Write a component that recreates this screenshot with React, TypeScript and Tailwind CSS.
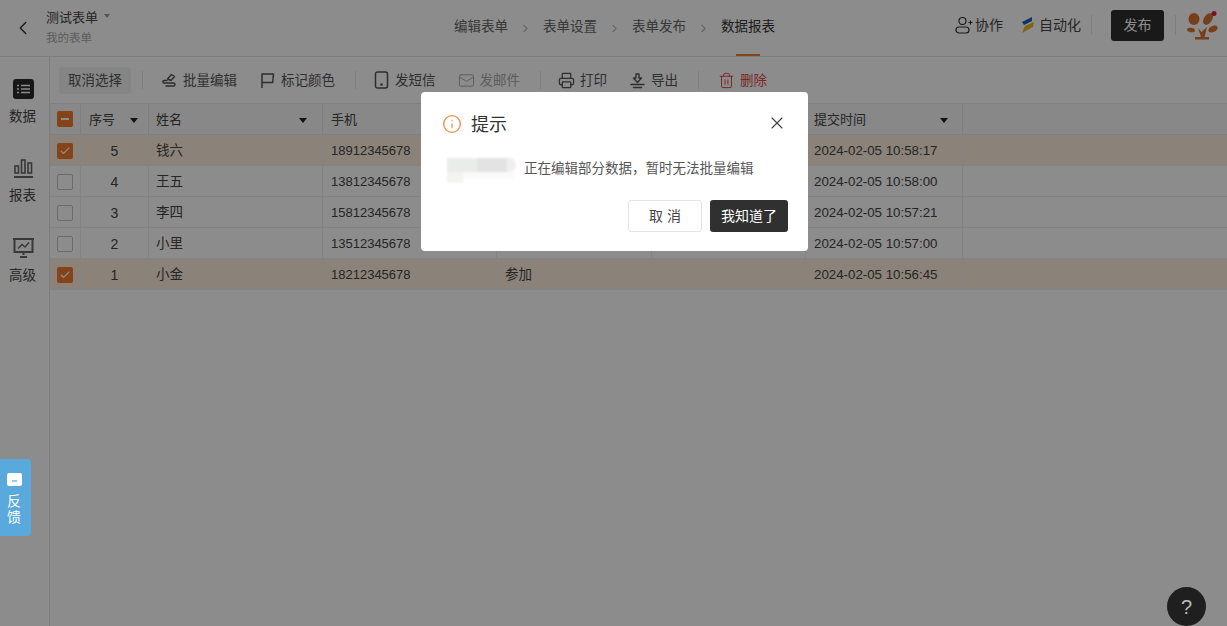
import { ChevronLeft, ChevronRight, Mail, Printer, Trash2, X, Check, Info } from "lucide-react";

const FONT = "font-['Liberation_Sans','Noto_Sans_CJK_SC',sans-serif]";

const rows = [
  { no: 5, name: "钱六", phone: "18912345678", answer: "", time: "2024-02-05 10:58:17", on: true },
  { no: 4, name: "王五", phone: "13812345678", answer: "", time: "2024-02-05 10:58:00", on: false },
  { no: 3, name: "李四", phone: "15812345678", answer: "", time: "2024-02-05 10:57:21", on: false },
  { no: 2, name: "小里", phone: "13512345678", answer: "", time: "2024-02-05 10:57:00", on: false },
  { no: 1, name: "小金", phone: "18212345678", answer: "参加", time: "2024-02-05 10:56:45", on: true },
];

const Caret = () => <span className="w-0 h-0 border-x-[4px] border-x-transparent border-t-[5px] border-t-[#222]" />;

const Divider = () => <div className="w-px h-[18px] bg-[#e6e6e6]" />;

// 工具栏按钮
const Tool = ({ icon, label, className = "text-[#555]" }: { icon: React.ReactNode; label: string; className?: string }) => (
  <div className={`flex items-center gap-[5px] text-[13.5px] ${className}`}>
    {icon}
    <span className="pt-[2px]">{label}</span>
  </div>
);

const EditIcon = () => (
  <svg width="17" height="17" viewBox="0 0 17 17" fill="none" stroke="currentColor" strokeWidth="1.4" strokeLinecap="round" strokeLinejoin="round">
    <path d="M6.5 7 10.5 2.5 13.5 4.5 10 8.5z" />
    <path d="M6 8.5H3C1.5 8.5 1.5 11 3 11H12.5C14.5 11 14.5 14 12.5 14H5" />
  </svg>
);

const FlagIcon = () => (
  <svg width="16" height="17" viewBox="0 0 16 17" fill="none" stroke="currentColor" strokeWidth="1.5" strokeLinejoin="round">
    <path d="M2 16V2h11.500l-.8 8.500H2" />
  </svg>
);

const PhoneIcon = () => (
  <svg width="17" height="18" viewBox="0 0 17 18" fill="none" stroke="currentColor" strokeWidth="1.5">
    <rect x="2.500" y="1" width="12" height="16" rx="2" />
    <circle cx="8.500" cy="13.500" r="0.6" fill="currentColor" />
  </svg>
);

const ExportIcon = () => (
  <svg width="17" height="17" viewBox="0 0 17 17" fill="none" stroke="currentColor" strokeWidth="1.4" strokeLinecap="round" strokeLinejoin="round">
    <path d="M7 2h3v4h2.500L8.500 10.500 4.500 6H7z" />
    <path d="M2 12.500h13M4.500 15.500h8" />
  </svg>
);

const DataIcon = () => (
  <svg width="21" height="21" viewBox="0 0 21 21">
    <rect width="21" height="20" rx="3" fill="#2b2b2b" />
    <path d="M4 6.500h2M8 6.500h9M4 10h2M8 10h9M4 13.500h2M8 13.500h9" stroke="#fff" strokeWidth="1.4" />
  </svg>
);

const ChartIcon = () => (
  <svg width="21" height="21" viewBox="0 0 21 21" fill="none" stroke="#666" strokeWidth="1.6">
    <rect x="2" y="8" width="3.500" height="7" />
    <rect x="8.500" y="2" width="3.500" height="13" />
    <rect x="15" y="5" width="3.500" height="10" />
    <path d="M1 19h19" strokeWidth="2" />
  </svg>
);

const ScreenIcon = () => (
  <svg width="21" height="21" viewBox="0 0 21 21" fill="none" stroke="#666" strokeWidth="2">
    <path d="M0 1h21M1.500 1v13h18V1" />
    <path d="M5 10.500 9 6.500 12 9 16 4.500" strokeWidth="1.4" />
    <path d="M10.500 14v3M7 19h7" />
  </svg>
);

const UserPlus = () => (
  <svg width="18" height="18" viewBox="0 0 18 18" fill="none" stroke="#333" strokeWidth="1.2">
    <circle cx="7.500" cy="5" r="3.500" />
    <rect x="1" y="11" width="13" height="6" rx="3" />
    <path d="M13.500 6.500h4M15.500 4.500v4" />
  </svg>
);

const BoltIcon = () => (
  <svg width="14" height="16" viewBox="0 0 14 16">
    <path d="M11 0 1 5 3 8 11 4z" fill="#1e5fb4" />
    <path d="M13 5 4 9 1 16 12 10z" fill="#e8b923" />
  </svg>
);

const TreeLogo = () => (
  <svg width="32" height="29" viewBox="0 0 32 29">
    <ellipse cx="7" cy="8" rx="5.500" ry="6" fill="#d8732e" />
    <ellipse cx="21" cy="8" rx="4" ry="6.500" fill="#d8732e" transform="rotate(35 21 8)" />
    <ellipse cx="4" cy="19" rx="4" ry="2.200" fill="#d8732e" transform="rotate(10 4 19)" />
    <ellipse cx="26" cy="18" rx="5" ry="3" fill="#d8732e" transform="rotate(-25 26 18)" />
    <path d="M11 17 14.500 21 20 16 17.500 26H22V28.500H8V26H14z" fill="#d8732e" />
    <circle cx="27" cy="2.500" r="2.500" fill="#d8234a" />
  </svg>
);

const Box = ({ on }: { on: boolean }) =>
  on ? (
    <span className="w-[16px] h-[16px] rounded-[2px] bg-[#f07a2c] flex items-center justify-center">
      <Check size={12} strokeWidth={2.2} color="#fff" />
    </span>
  ) : (
    <span className="w-[16px] h-[16px] rounded-[2px] border border-[#c4c4c4] bg-white" />
  );

export default function App() {
  return (
    <div className={`relative w-[1227px] h-[626px] overflow-hidden bg-white text-[#333] ${FONT}`}>
      {/* 顶栏 */}
      <header className="h-[57px] border-b border-[#e4e4e4] flex items-center bg-white">
        <ChevronLeft size={22} strokeWidth={1.5} className="ml-[12px] text-[#333]" />
        <div className="ml-[12px] w-[105px] self-start pt-[9px]">
          <div className="flex items-center gap-[6px] text-[13px] leading-[18px] text-[#444]">
            测试表单
            <span className="w-0 h-0 border-x-[3px] border-x-transparent border-t-[4px] border-t-[#999] -mt-1" />
          </div>
          <div className="text-[11.5px] leading-[16px] mt-[3px] text-[#aaa]">我的表单</div>
        </div>
        <nav className="ml-[303px] flex items-center text-[13.5px] text-[#666] h-full">
          <span className="pb-[2px]">编辑表单</span>
          <ChevronRight size={13} className="mx-[11px] text-[#bbb]" />
          <span className="pb-[2px]">表单设置</span>
          <ChevronRight size={13} className="mx-[11px] text-[#bbb]" />
          <span className="pb-[2px]">表单发布</span>
          <ChevronRight size={13} className="mx-[11px] text-[#bbb]" />
          <span className="relative h-full flex items-center pb-[2px] text-[#333]">
            数据报表
            <span className="absolute bottom-0 left-[15px] w-[24px] h-[2px] bg-[#f07a2c]" />
          </span>
        </nav>
        <div className="ml-auto flex items-center h-full pb-[6px]">
          <div className="flex items-center gap-[2px] text-[14px] text-[#444]">
            <UserPlus />
            协作
          </div>
          <div className="ml-[18px] flex items-center gap-[4px] text-[14px] text-[#444]">
            <BoltIcon />
            自动化
          </div>
          <div className="ml-[10px] w-px h-[20px] bg-[#e6e6e6]" />
          <div className="ml-[19px] w-[53px] h-[31px] rounded-[3px] bg-[#2e2e2e] text-white text-[14px] flex items-center justify-center">发布</div>
          <div className="ml-[11px] w-px h-[20px] bg-[#e6e6e6]" />
          <div className="ml-[11px] mr-[8px]">
            <TreeLogo />
          </div>
        </div>
      </header>

      <div className="flex h-[569px]">
        {/* 左侧导航 */}
        <aside className="w-[50px] shrink-0 border-r border-[#e4e4e4] flex flex-col items-center pt-[22px] pr-[2px] text-[13.5px] text-[#444]">
          <DataIcon />
          <span className="mt-[7px] -ml-[2px] leading-[20px]">数据</span>
          <div className="mt-[31px]"><ChartIcon /></div>
          <span className="mt-[7px] -ml-[2px] leading-[20px]">报表</span>
          <div className="mt-[32px]"><ScreenIcon /></div>
          <span className="mt-[7px] -ml-[2px] leading-[20px]">高级</span>
        </aside>

        <main className="flex-1 min-w-0">
          {/* 工具栏 */}
          <div className="h-[46px] flex items-center pl-[9px]">
            <div className="h-[27px] px-[9px] pt-[2px] rounded-[3px] bg-[#f3f3f3] text-[13.5px] text-[#555] flex items-center">取消选择</div>
            <div className="ml-[11px]"><Divider /></div>
            <div className="ml-[18px]"><Tool icon={<EditIcon />} label="批量编辑" /></div>
            <div className="ml-[23px]"><Tool icon={<FlagIcon />} label="标记颜色" /></div>
            <div className="ml-[20px]"><Divider /></div>
            <div className="ml-[17px]"><Tool icon={<PhoneIcon />} label="发短信" /></div>
            <div className="ml-[22px]"><Tool icon={<Mail size={17} strokeWidth={1.4} />} label="发邮件" className="text-[#aaa]" /></div>
            <div className="ml-[20px]"><Divider /></div>
            <div className="ml-[17px]"><Tool icon={<Printer size={17} strokeWidth={1.8} />} label="打印" /></div>
            <div className="ml-[22px]"><Tool icon={<ExportIcon />} label="导出" /></div>
            <div className="ml-[20px]"><Divider /></div>
            <div className="ml-[19px]"><Tool icon={<Trash2 size={17} strokeWidth={1.4} />} label="删除" className="text-[#e04848]" /></div>
          </div>

          {/* 表格 */}
          <div className="text-[13.5px] text-[#444]">
            <div className="h-[32px] flex bg-[#f7f7f7] border-y border-[#eaeaea] text-[13px]">
              <div className="w-[31px] border-r border-[#e6e6e6] flex items-center justify-center">
                <span className="w-[16px] h-[16px] rounded-[2px] bg-[#f07a2c] flex items-center justify-center">
                  <span className="w-[8px] h-[2px] bg-white" />
                </span>
              </div>
              <div className="w-[68px] border-r border-[#e6e6e6] flex items-center justify-between pt-[2px] pl-[8px] pr-[10px]">序号<Caret /></div>
              <div className="w-[174px] border-r border-[#e6e6e6] flex items-center justify-between pt-[2px] pl-[7px] pr-[15px]">姓名<Caret /></div>
              <div className="w-[174px] border-r border-[#e6e6e6] flex items-center pt-[2px] pl-[8px]">手机</div>
              <div className="w-[155px] border-r border-[#e6e6e6]" />
              <div className="w-[154px] border-r border-[#e6e6e6]" />
              <div className="w-[157px] border-r border-[#e6e6e6] flex items-center justify-between pt-[2px] pl-[8px] pr-[14px]">提交时间<Caret /></div>
            </div>
            {rows.map((r) => (
              <div key={r.no} className={`h-[31px] flex border-b border-[#eeeeee] ${r.on ? "bg-[#fdeedd]" : "bg-white"}`}>
                <div className="w-[31px] border-r border-[#eeeeee] flex items-center justify-center pt-[2px]"><Box on={r.on} /></div>
                <div className="w-[68px] border-r border-[#eeeeee] flex items-center justify-center pt-[2px] text-[14px]">{r.no}</div>
                <div className="w-[174px] border-r border-[#eeeeee] flex items-center pt-[2px] pl-[7px]">{r.name}</div>
                <div className="w-[174px] border-r border-[#eeeeee] flex items-center pt-[2px] pl-[8px] text-[13px]">{r.phone}</div>
                <div className="w-[155px] border-r border-[#eeeeee] flex items-center pt-[2px] pl-[8px]">{r.answer}</div>
                <div className="w-[154px] border-r border-[#eeeeee]" />
                <div className="w-[157px] border-r border-[#eeeeee] flex items-center pt-[2px] pl-[8px] text-[13.3px]">{r.time}</div>
              </div>
            ))}
          </div>
        </main>
      </div>

      {/* 遮罩 */}
      <div className="absolute inset-0 bg-black/45" />

      {/* 弹窗 */}
      <div className="absolute left-[421px] top-[92px] w-[387px] h-[159px] rounded-[4px] bg-white px-[20px] pt-[20px]">
        <div className="flex items-center h-[24px]">
          <Info size={20} strokeWidth={1.6} color="#f58a45" className="ml-[1px]" />
          <span className="ml-[9px] pt-[2px] text-[18px] text-[#333]">提示</span>
          <X size={20} strokeWidth={1.4} color="#444" className="ml-auto mr-[1px] -mt-[2px]" />
        </div>
        <div className="mt-[23px] flex items-center h-[20px] text-[13.5px] text-[#555]">
          <div className="relative ml-[6px] w-[70px] h-[20px] blur-[1px]">
            <div className="absolute left-0 top-[-1px] w-[30px] h-[14px] bg-[#e9ede9]" />
            <div className="absolute left-[30px] top-[-1px] w-[30px] h-[14px] bg-[#e3e3e3]" />
            <div className="absolute left-[60px] top-[-1px] w-[9px] h-[14px] rounded-r-full bg-[#efefef]" />
            <div className="absolute left-0 top-[13px] w-[16px] h-[11px] bg-[#f3f3f0]" />
            <div className="absolute left-[16px] top-[13px] w-[52px] h-[7px] bg-[#fafafa]" />
          </div>
          <span className="ml-[7px]">正在编辑部分数据，暂时无法批量编辑</span>
        </div>
        <div className="mt-[21px] flex justify-end gap-[8px]">
          <div className="w-[74px] h-[32px] rounded-[3px] border border-[#e4e4e4] text-[14px] text-[#444] flex items-center justify-center">取 消</div>
          <div className="w-[78px] h-[32px] rounded-[3px] bg-[#303030] text-[14px] text-white flex items-center justify-center">我知道了</div>
        </div>
      </div>

      {/* 反馈 */}
      <div className="absolute left-0 top-[459px] w-[31px] h-[77px] rounded-r-[4px] bg-[#5aa9dc] text-white text-[14px] leading-[16px] flex flex-col items-center pt-[14px] pr-[3px]">
        <svg width="15" height="13" viewBox="0 0 15 13">
          <path d="M2 0h11a2 2 0 0 1 2 2v9a2 2 0 0 1-2 2H2a2 2 0 0 1-2-2V2a2 2 0 0 1 2-2z" fill="#fff" />
          <path d="M5 8h5" stroke="#5aa9dc" strokeWidth="1.200" />
        </svg>
        <span className="mt-[7px]">反</span>
        <span>馈</span>
      </div>

      {/* 帮助 */}
      <div className="absolute left-[1167px] top-[587px] w-[39px] h-[39px] rounded-full bg-[#1f1f1f] text-[#bbb] text-[20px] flex items-center justify-center">?</div>
    </div>
  );
}
